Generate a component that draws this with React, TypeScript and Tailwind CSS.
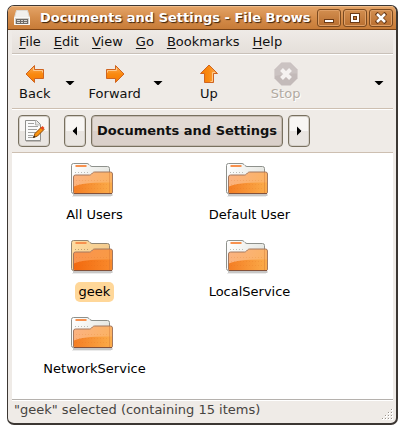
import React, { useState } from "react";

function DriveIcon() {
  return (
    <svg width="16" height="16" viewBox="0 0 16 16" aria-hidden="true">
      <path d="M2.5 .5h11l2 7v7h-15v-7z" fill="#f1f0ed" stroke="#dedbd5" />
      <path d="M.5 7.500h15v7h-15z" fill="#d0cdc8" stroke="#f8f8f6" />
      <path d="M2 9h12v5H2z" fill="#6f6c68" />
      <path d="M3 10.500h3M7 10.500h2M10 10.500h3M3 12.500h3M7 12.500h2M10 12.500h3" stroke="#d8d6d2" />
    </svg>
  );
}

function ArrowIcon({ className }: { className: string }) {
  return (
    <svg width="20" height="20" viewBox="0 0 20 20" className={className} aria-hidden="true">
      <defs>
        <linearGradient id="arrow" x1="0" y1="0" x2="0" y2="1">
          <stop offset="0" stopColor="#fcaf5e" />
          <stop offset="0.5" stopColor="#fa8a10" />
          <stop offset="1" stopColor="#f57900" />
        </linearGradient>
      </defs>
      <path d="M9.500 1.500v4h9v9h-9v4L1 10z" fill="url(#arrow)" stroke="#cf6420" strokeLinejoin="round" />
      <path d="M8.500 4v2.500h9v2" fill="none" stroke="#ffc98c" />
    </svg>
  );
}

function StopIcon() {
  return (
    <svg width="24" height="24" viewBox="0 0 24 24" aria-hidden="true">
      <path d="M7.500 .5h9l7 7v9l-7 7h-9l-7-7v-9z" fill="#c3bab9" />
      <path d="M7.500 1h9l6.500 6.500v4Q12 11 1 14V7.500z" fill="#cbc3c2" />
      <path d="M7.500 7.500l9 9M16.500 7.500l-9 9" stroke="#f5f2f1" strokeWidth="4" />
    </svg>
  );
}

function Triangle({ side }: { side: "down" | "left" | "right" }) {
  const shapes = {
    down: "M.5 4h9L5.500 8h-1z",
    left: "M7 .5v9L3 5.500v-1z",
    right: "M3 .5v9l4-4v-1z",
  };
  return (
    <svg width="10" height="10" viewBox="0 0 10 10" aria-hidden="true">
      <path d={shapes[side]} fill="#000" />
    </svg>
  );
}

function EditIcon() {
  return (
    <svg width="22" height="24" viewBox="0 0 22 24" aria-hidden="true">
      <path d="M3 22.500h15" stroke="#bdb8b3" />
      <path d="M2.500 1.500h11l4 4v16h-15z" fill="#fafafa" stroke="#8f8f8c" strokeLinejoin="round" />
      <path d="M12.500 1.500v4.500h5" fill="#e4e4e2" stroke="#b5b5b2" />
      <path d="M5 4.500h6M5 7.500h10M5 10.500h9M5 13.500h8M5 16.500h5M5 18.500h5" stroke="#a2a2a0" />
      <path d="M10.500 18.500l1.500-4 6.500-6.500 2.500 2.500-6.500 6.500z" fill="#f9920f" stroke="#8c4a08" />
      <path d="M17.500 9l2-2 2 2-2 2z" fill="#e8461c" />
      <path d="M10 19l1-2.500 1.500 1.500z" fill="#222" />
    </svg>
  );
}

function FolderIcon({ selected }: { selected: boolean }) {
  const id = selected ? "sel" : "std";
  return (
    <svg width="50" height="43" viewBox="0 0 50 43" aria-hidden="true">
      <defs>
        <linearGradient id={`front-${id}`} x1="0" y1="0" x2="1" y2="0.300">
          <stop offset="0" stopColor={selected ? "#f99350" : "#fbb384"} />
          <stop offset="1" stopColor={selected ? "#f99a45" : "#fbb263"} />
        </linearGradient>
        <linearGradient id={`low-${id}`} x1="0" y1="0" x2="1" y2="0">
          <stop offset="0" stopColor={selected ? "#f2690e" : "#f47e24"} />
          <stop offset="1" stopColor={selected ? "#f98a2c" : "#fbac4a"} />
        </linearGradient>
        <linearGradient id={`back-${id}`} x1="0" y1="0" x2="1" y2="0.300">
          <stop offset="0" stopColor={selected ? "#ffdda2" : "#ffffff"} />
          <stop offset="1" stopColor={selected ? "#f3ca8c" : "#e6e7e2"} />
        </linearGradient>
      </defs>
      <path d="M3 33h39.500" stroke="#000" strokeOpacity=".22" strokeWidth="2" />
      <path d="M2 34.500h39" stroke="#000" strokeOpacity=".08" />
      <path
        d="M3.500 31.500q-2 0-2-2v-26q0-2 2-2h13.500q1 0 2 1l1 1q1 1 2 1h15.500q2 0 2 2v25z"
        fill={`url(#back-${id})`}
        stroke={selected ? "#928672" : "#8e918c"}
      />
      <path d="M5.500 4h11" stroke="#f8914e" strokeWidth="2" />
      <path d="M5 10.500h15" stroke={selected ? "#bd9e70" : "#bbbcb7"} strokeDasharray="1 2" />
      <path
        d="M3.500 30v-15q0-2 2-2h14q1 0 2-1l1-1q1-1 2-1h16q2 0 2 2v18q0 1.500-1.500 1.500h-36q-1.500 0-1.500-1.500z"
        fill={`url(#front-${id})`}
        stroke="#a37860"
      />
      <path d="M4 24.500Q14 20 42 20.500v9q0 1.500-1.500 1.500h-35Q4 31 4 29.500z" fill={`url(#low-${id})`} />
      <path d="M6 18.500h32M6 22.500h32M6 26.500h32" stroke="#d9671a" strokeOpacity=".18" strokeDasharray="1 2" />
      <path d="M39.500 10v21" stroke="#c96a30" strokeOpacity=".35" />
      <path d="M4 31.500h38" stroke="#83513a" />
    </svg>
  );
}

const menus = ["File", "Edit", "View", "Go", "Bookmarks", "Help"];
const folders = ["All Users", "Default User", "geek", "LocalService", "NetworkService"];

const windowButton =
  "flex h-[18px] w-6 items-center justify-center rounded-[3px] border border-[#7b4a20] bg-linear-to-b from-[#d28e4f] to-[#b96f30] shadow-[inset_0_0_0_1px_#dfa067]";
const pathButton =
  "flex h-8 items-center justify-center rounded-[4px] border border-[#78705f] bg-linear-to-b";
const raised = "from-[#f8f6f4] from-50% to-[#e9e5e1] to-50% shadow-[inset_0_0_0_1px_#d5d0c9]";

function ToolButton({
  label,
  disabled = false,
  children,
}: {
  label: string;
  disabled?: boolean;
  children: React.ReactNode;
}) {
  return (
    <button
      type="button"
      disabled={disabled}
      className="flex flex-col items-center disabled:text-[#b1aaa2] disabled:[text-shadow:1px_1px_0_#fff]"
    >
      <span className="flex h-6 items-center">{children}</span>
      <span>{label}</span>
    </button>
  );
}

export default function App() {
  const [selected, setSelected] = useState("geek");

  return (
    <div className="flex min-h-screen bg-white pt-[5px] pr-[6px] pb-[5px] pl-[7px] font-['DejaVu_Sans',sans-serif] text-[13px] leading-4 text-[#111]">
      <div className="flex min-w-0 flex-1 flex-col overflow-hidden rounded-[7px] border border-r-2 border-b-2 border-[#3c3733] bg-[#efebe7]">
        <header className="flex h-6 items-center gap-[2px] border-b border-[#7b4417] bg-linear-to-b from-[#e4a468] via-[#d58d4b] to-[#c77c38] pr-[3px] pl-[6px] shadow-[inset_0_1px_0_#efbc89]">
          <DriveIcon />
          <h1 className="ml-2 min-w-0 flex-1 overflow-hidden font-bold whitespace-nowrap text-white [text-shadow:1px_1px_1px_#3b210c]">
            Documents and Settings - File Brows
          </h1>
          <button type="button" aria-label="Minimize" className={windowButton}>
            <svg width="12" height="12" viewBox="0 0 12 12" aria-hidden="true">
              <path d="M1 7h10v4H1z" fill="#6c3b17" />
              <path d="M2 8h8v2H2z" fill="#fff" />
            </svg>
          </button>
          <button type="button" aria-label="Maximize" className={windowButton}>
            <svg width="12" height="12" viewBox="0 0 12 12" aria-hidden="true">
              <path d="M3 3h6v6H3z" fill="none" stroke="#6c3b17" strokeWidth="4" />
              <path d="M3 3h6v6H3z" fill="none" stroke="#fff" strokeWidth="2" />
            </svg>
          </button>
          <button type="button" aria-label="Close" className={windowButton}>
            <svg width="12" height="12" viewBox="0 0 12 12" aria-hidden="true">
              <path d="M2.500 2.500l7 7M9.500 2.500l-7 7" stroke="#6c3b17" strokeWidth="4" strokeLinecap="square" />
              <path d="M2 2l8 8M10 2l-8 8" stroke="#fff" strokeWidth="2.500" />
            </svg>
          </button>
        </header>

        <div className="flex flex-1 flex-col pr-[3px] pl-1">
          <nav className="flex h-6 items-center gap-[13px] border-b border-[#c9c1b9] bg-linear-to-b from-[#efebe7] to-[#e5dfda] px-[7px]">
            {menus.map((name) => (
              <button key={name} type="button">
                <span className="underline underline-offset-2">{name[0]}</span>
                {name.slice(1)}
              </button>
            ))}
          </nav>

          <div className="flex h-[55px] items-center border-t border-b border-t-white border-b-[#cdbfb1] pr-[9px] pl-[7px]">
            <ToolButton label="Back">
              <ArrowIcon className="" />
            </ToolButton>
            <button type="button" aria-label="Back history" className="ml-[14px]">
              <Triangle side="down" />
            </button>
            <span className="ml-[14px] flex">
              <ToolButton label="Forward">
                <ArrowIcon className="-scale-x-100" />
              </ToolButton>
            </span>
            <button type="button" aria-label="Forward history" className="ml-3">
              <Triangle side="down" />
            </button>
            <span className="ml-9 flex">
              <ToolButton label="Up">
                <ArrowIcon className="rotate-90" />
              </ToolButton>
            </span>
            <span className="ml-[52px] flex">
              <ToolButton label="Stop" disabled>
                <StopIcon />
              </ToolButton>
            </span>
            <button type="button" aria-label="More tools" className="ml-auto">
              <Triangle side="down" />
            </button>
          </div>

          <div className="flex h-11 items-center border-t border-b border-t-white border-b-[#cdbfb1] px-[6px]">
            <button type="button" aria-label="Edit location" className={`${pathButton} ${raised} w-8`}>
              <EditIcon />
            </button>
            <button type="button" aria-label="Previous folder" className={`${pathButton} ${raised} ml-[14px] w-[22px]`}>
              <Triangle side="left" />
            </button>
            <button
              type="button"
              className={`${pathButton} ml-[5px] from-[#e2dad4] from-50% to-[#dad0ca] to-50% px-[5px] font-bold whitespace-nowrap shadow-[inset_0_0_0_1px_#c4bab0]`}
            >
              Documents and Settings
            </button>
            <button type="button" aria-label="Next folder" className={`${pathButton} ${raised} ml-[5px] w-[22px]`}>
              <Triangle side="right" />
            </button>
          </div>

          <main className="flex-1 bg-white pt-[9px] pb-5 pl-[5px]">
            <div className="grid grid-cols-[repeat(auto-fill,155px)] gap-y-[14px]">
              {folders.map((name) => (
                <button
                  key={name}
                  type="button"
                  aria-pressed={selected === name}
                  onClick={() => setSelected(name)}
                  className="flex flex-col items-center text-black"
                >
                  <FolderIcon selected={selected === name} />
                  <span className={`rounded-[5px] px-1 py-[2px] ${selected === name ? "bg-[#ffd799]" : ""}`}>
                    {name}
                  </span>
                </button>
              ))}
            </div>
          </main>

          <footer className="flex h-6 items-center justify-between border-t border-[#b5b1ad] pb-[3px] pl-[2px] text-[#474441] shadow-[inset_0_1px_0_#fff]">
            <span>"geek" selected (containing 15 items)</span>
            <svg width="12" height="12" viewBox="0 0 12 12" className="self-end" aria-hidden="true">
              <g fill="#fff">
                <path d="M10 1h2v2h-2zM7 4h2v2H7zM10 4h2v2h-2zM4 7h2v2H4zM7 7h2v2H7zM10 7h2v2h-2zM1 10h2v2H1zM4 10h2v2H4zM7 10h2v2H7zM10 10h2v2h-2z" />
              </g>
              <g fill="#9b948c">
                <path d="M10 1h1v1h-1zM7 4h1v1H7zM10 4h1v1h-1zM4 7h1v1H4zM7 7h1v1H7zM10 7h1v1h-1zM1 10h1v1H1zM4 10h1v1H4zM7 10h1v1H7zM10 10h1v1h-1z" />
              </g>
            </svg>
          </footer>
        </div>
      </div>
    </div>
  );
}
